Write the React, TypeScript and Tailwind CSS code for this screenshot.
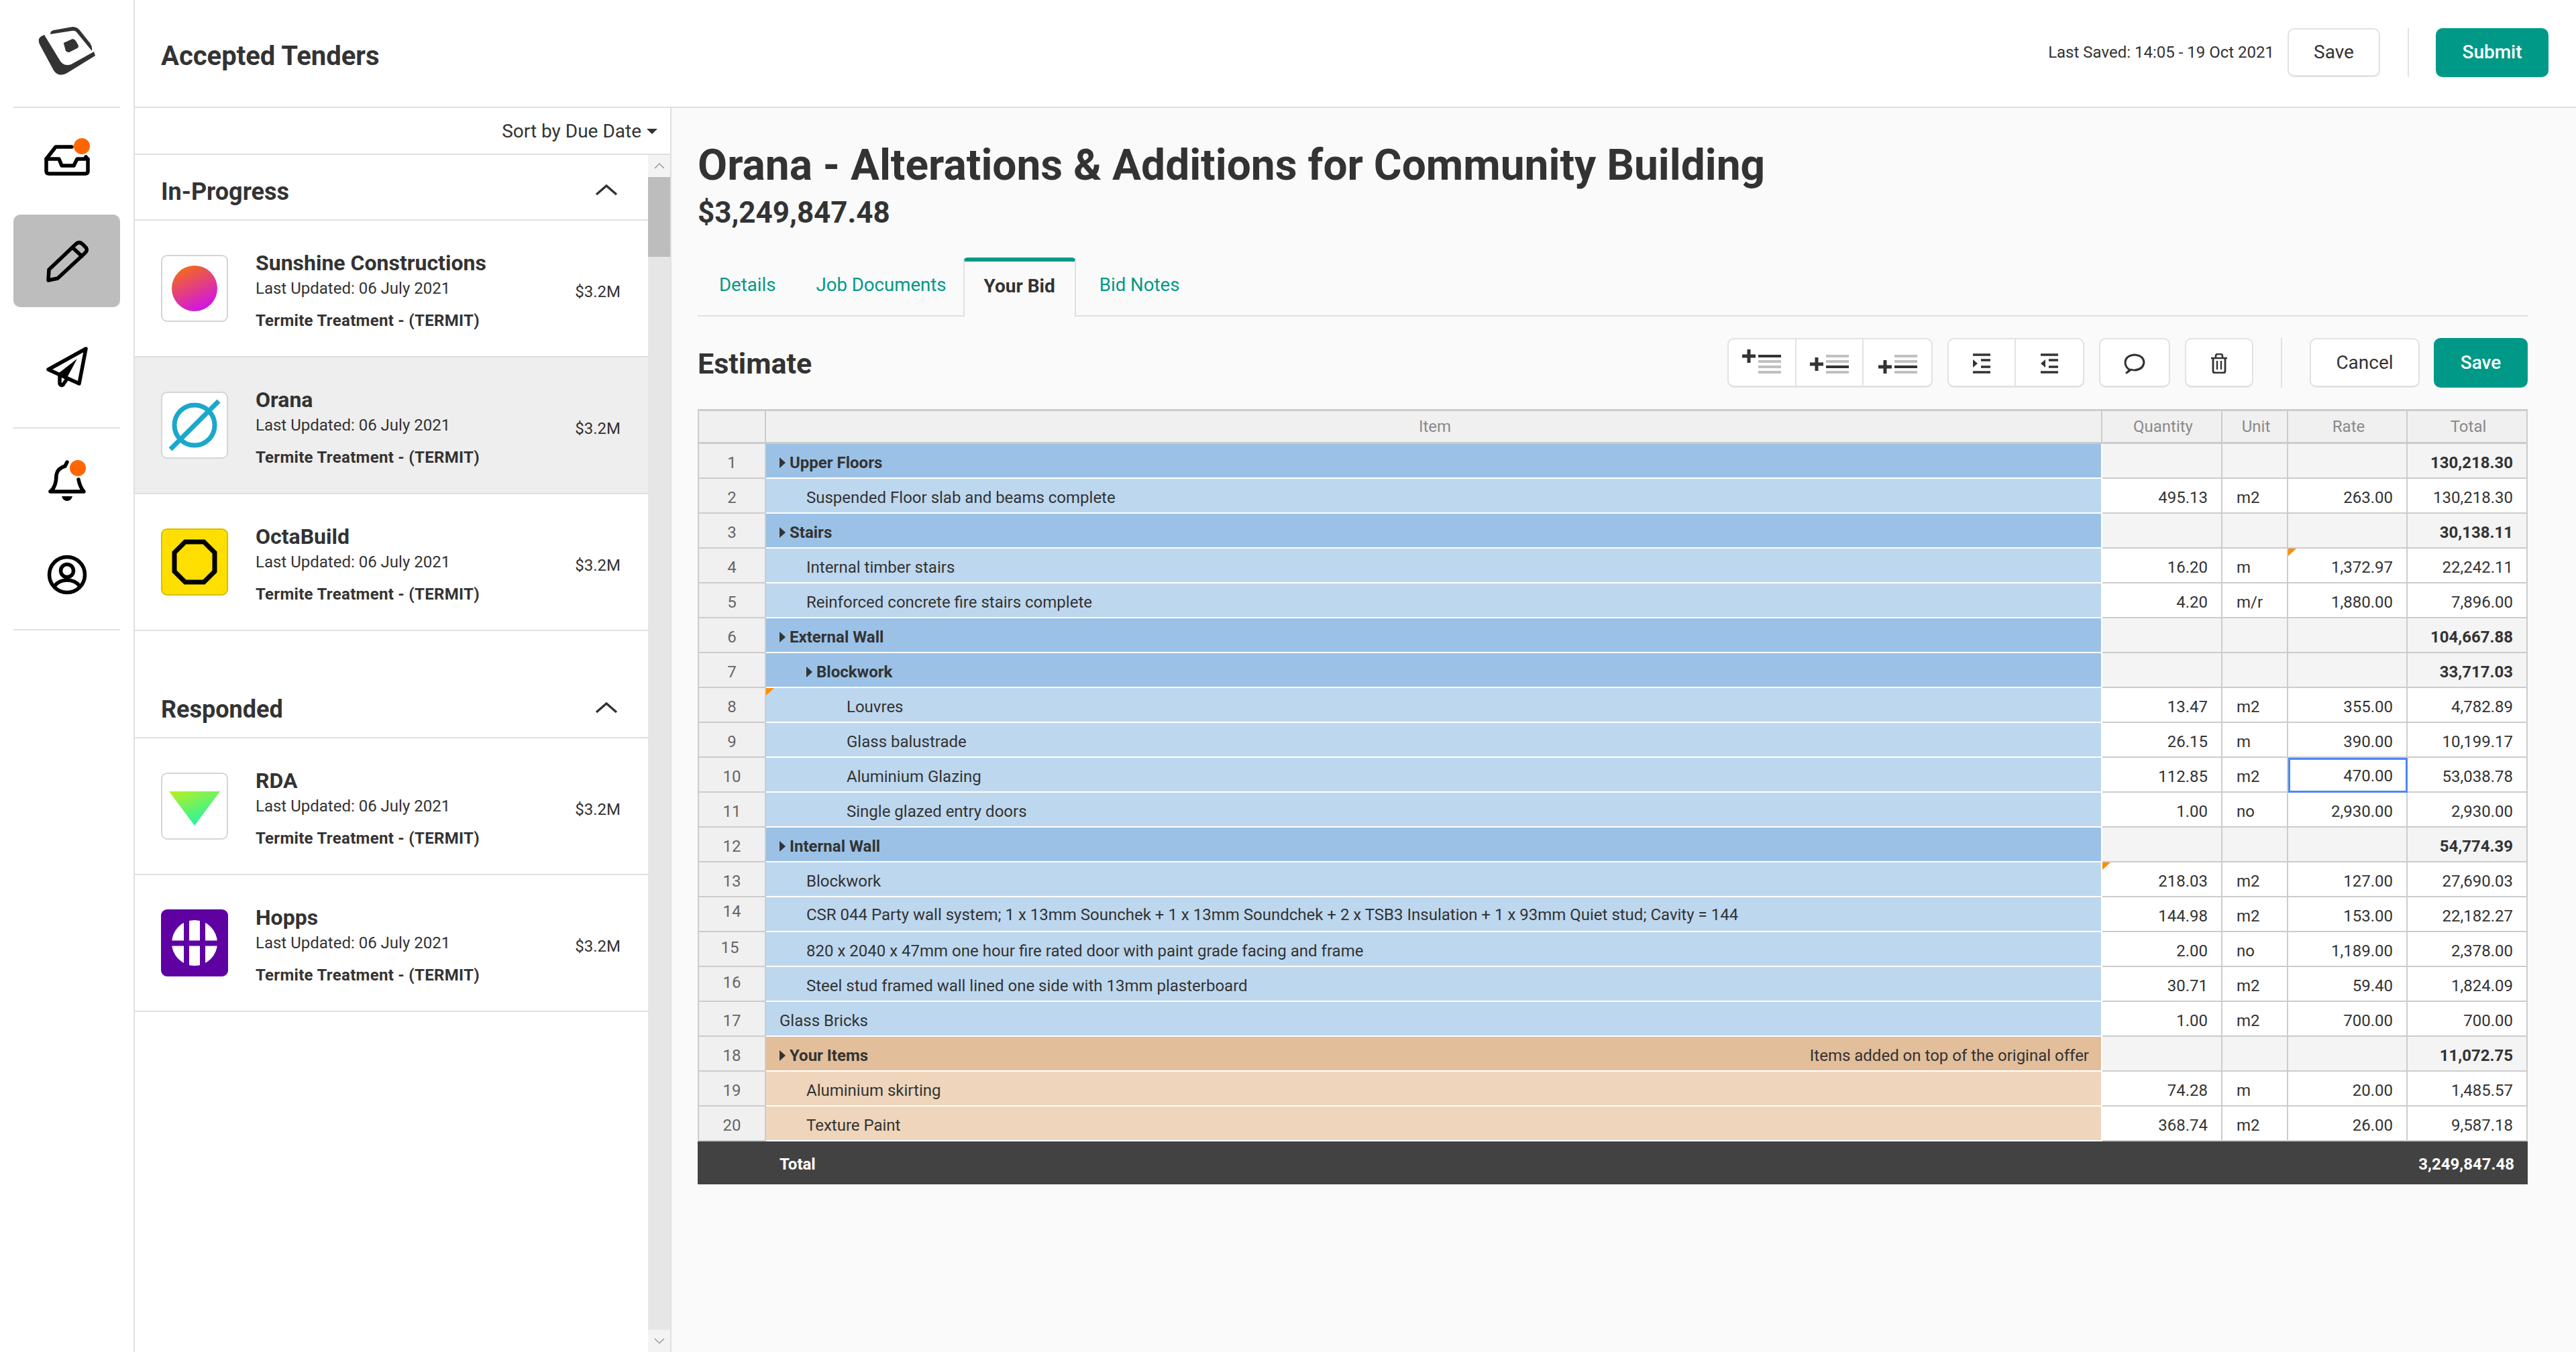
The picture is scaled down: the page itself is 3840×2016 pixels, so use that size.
import React from 'react';

type Row = {
  n: number;
  text: string;
  kind: 'group' | 'item';
  indent?: 0 | 1 | 2;
  tan?: boolean;
  qty?: string;
  unit?: string;
  rate?: string;
  total: string;
  note?: 'item' | 'qty' | 'rate';
  numCls?: string;
  textCls?: string;
};

const rows: Row[] = [
  { n: 1, text: 'Upper Floors', kind: 'group', total: '130,218.30' },
  { n: 2, text: 'Suspended Floor slab and beams complete', kind: 'item', indent: 1, qty: '495.13', unit: 'm2', rate: '263.00', total: '130,218.30' },
  { n: 3, text: 'Stairs', kind: 'group', total: '30,138.11' },
  { n: 4, text: 'Internal timber stairs', kind: 'item', indent: 1, qty: '16.20', unit: 'm', rate: '1,372.97', total: '22,242.11', note: 'rate' },
  { n: 5, text: 'Reinforced concrete fire stairs complete', kind: 'item', indent: 1, qty: '4.20', unit: 'm/r', rate: '1,880.00', total: '7,896.00' },
  { n: 6, text: 'External Wall', kind: 'group', total: '104,667.88' },
  { n: 7, text: 'Blockwork', kind: 'group', indent: 1, total: '33,717.03' },
  { n: 8, text: 'Louvres', kind: 'item', indent: 2, qty: '13.47', unit: 'm2', rate: '355.00', total: '4,782.89', note: 'item' },
  { n: 9, text: 'Glass balustrade', kind: 'item', indent: 2, qty: '26.15', unit: 'm', rate: '390.00', total: '10,199.17' },
  { n: 10, text: 'Aluminium Glazing', kind: 'item', indent: 2, qty: '112.85', unit: 'm2', rate: '470.00', total: '53,038.78' },
  { n: 11, text: 'Single glazed entry doors', kind: 'item', indent: 2, qty: '1.00', unit: 'no', rate: '2,930.00', total: '2,930.00' },
  { n: 12, text: 'Internal Wall', kind: 'group', total: '54,774.39' },
  { n: 13, text: 'Blockwork', kind: 'item', indent: 1, qty: '218.03', unit: 'm2', rate: '127.00', total: '27,690.03', note: 'qty' },
  { n: 14, text: 'CSR 044 Party wall system; 1 x 13mm Sounchek + 1 x 13mm Soundchek + 2 x TSB3 Insulation + 1 x 93mm Quiet stud; Cavity = 144', kind: 'item', indent: 1, qty: '144.98', unit: 'm2', rate: '153.00', total: '22,182.27', numCls: 'pb-[14px]', textCls: 'pt-[2px]' },
  { n: 15, text: '820 x 2040 x 47mm one hour fire rated door with paint grade facing and frame', kind: 'item', indent: 1, qty: '2.00', unit: 'no', rate: '1,189.00', total: '2,378.00', numCls: 'pb-[9px] pr-[6px]', textCls: 'pt-[6px]' },
  { n: 16, text: 'Steel stud framed wall lined one side with 13mm plasterboard', kind: 'item', indent: 1, qty: '30.71', unit: 'm2', rate: '59.40', total: '1,824.09', numCls: 'pb-[10px]', textCls: 'pt-[6px]' },
  { n: 17, text: 'Glass Bricks', kind: 'item', qty: '1.00', unit: 'm2', rate: '700.00', total: '700.00' },
  { n: 18, text: 'Your Items', kind: 'group', tan: true, total: '11,072.75' },
  { n: 19, text: 'Aluminium skirting', kind: 'item', indent: 1, tan: true, qty: '74.28', unit: 'm', rate: '20.00', total: '1,485.57' },
  { n: 20, text: 'Texture Paint', kind: 'item', indent: 1, tan: true, qty: '368.74', unit: 'm2', rate: '26.00', total: '9,587.18' },
];

const gridCols = 'grid grid-cols-[102px_1992px_179px_98px_178px_179px]';

// Small flag in the corner of a cell with a comment on it
function Note() {
  return <span className="absolute left-0 top-0 h-[11px] w-[12px] bg-[#ff8c00] [clip-path:polygon(0_0,100%_0,0_100%)]" />;
}

function Caret() {
  return (
    <svg width="9" height="16" viewBox="0 0 9 16" className="mr-[6px] shrink-0">
      <path d="M0 0 L9 8 L0 16 Z" fill="#333333" />
    </svg>
  );
}

function ChevronUp() {
  return (
    <svg width="34" height="18" viewBox="0 0 34 18">
      <path d="M2 16 L17 3 L32 16" fill="none" stroke="#333333" strokeWidth="3.5" />
    </svg>
  );
}

function TierIcon({ plusY, dark }: { plusY: number; dark: number }) {
  return (
    <svg width="68" height="44" viewBox="0 0 68 44" className="mr-[10px] mt-[4px]">
      <path d={`M10 ${plusY} H30 M20 ${plusY - 10} V${plusY + 10}`} stroke="#333333" strokeWidth="5" />
      {[10, 18, 26, 34].map((y, i) => (
        <rect key={y} x="34" y={y - 2} width="34" height="4" fill={i === dark ? '#333333' : '#c0c0c0'} />
      ))}
    </svg>
  );
}

function IndentIcon({ out }: { out?: boolean }) {
  return (
    <svg width="26" height="30" viewBox="0 0 26 30" className="mt-[3px]">
      <path d="M0 2 H26 M0 28 H26 M12 10 H26 M12 20 H26" stroke="#333333" strokeWidth="3.5" />
      <path d={out ? 'M7 9 L0 15 L7 21 Z' : 'M0 9 L7 15 L0 21 Z'} fill="#333333" />
    </svg>
  );
}

function LogoMark() {
  return (
    <svg width="120" height="120" viewBox="0 0 120 120">
      <path d="M18 38 Q20 34 26 32 L48 68 Q54 80 66 76 L100 57 L102 63 L63 87 Q48 97 40 85 L19 46 Q17 42 18 38 Z" fill="#333333" />
      <path d="M35 31 Q35 26 40 25 L68 20 Q74 20 78 24 L94 44 Q98 50 97 56 L75 29 Q72 25 67 26 Z" fill="#333333" />
      <path d="M55 45 Q54 44 57 43 L68 38 Q71 38 73 41 L77 48 Q77 51 75 52 L63 58 Q60 58 58 56 Z" fill="#333333" />
    </svg>
  );
}

function NavSlot({ children, active, cls }: { children: React.ReactNode; active?: boolean; cls: string }) {
  return (
    <div className={`mx-5 flex h-[138px] items-center justify-center rounded-[10px] ${active ? 'bg-[#bdbdbd]' : ''} ${cls}`}>
      {children}
    </div>
  );
}

function Sidebar() {
  const icon = { fill: 'none', stroke: '#000000', strokeWidth: 5.5, strokeLinejoin: 'round', strokeLinecap: 'round' } as const;
  return (
    <div className="flex w-[201px] shrink-0 flex-col border-r-2 border-[#e0e0e0]">
      <div className="flex h-[152px] items-center justify-center pt-[8px]">
        <LogoMark />
      </div>
      <div className="mx-5 border-b-2 border-[#e0e0e0] pt-[7px]" />
      <NavSlot cls="mt-[10px]">
        <svg width="110" height="110" viewBox="-5 -5 110 110">
          <path d="M57 29 H33 L19 47 V65 Q19 69 23 69 H77 Q81 69 81 65 V48 L78 44" {...icon} />
          <path d="M19 47 H38 L42 57 H60 L65 47 H81" {...icon} />
          <circle cx="72" cy="28" r="12" fill="#ff6600" />
        </svg>
      </NavSlot>
      <NavSlot active cls="mt-[11px]">
        <svg width="110" height="110" viewBox="-5 144 110 110">
          <path d="M22 228 L23 212 L63 174 Q68 169 73 174 L78 179 Q81 183 77 187 L36 225 Z" {...icon} />
          <path d="M59 180 L72 192" {...icon} />
        </svg>
      </NavSlot>
      <NavSlot cls="mt-[21px]">
        <svg width="110" height="110" viewBox="-5 303 110 110">
          <path d="M78 330 L22 361 L68 382 Z" {...icon} />
          <path d="M39 368 V382 Q42 387 45 382 L50 375" {...icon} />
          <path d="M65 345 L38 366 L50 373 Z" fill="#000000" />
        </svg>
      </NavSlot>
      <div className="mx-5 mt-[20px] border-b-2 border-[#e0e0e0]" />
      <NavSlot cls="mt-[9px]">
        <svg width="110" height="110" viewBox="-5 -8 110 110">
          <path d="M50 19 L47 25 Q36 28 34 38 Q34 56 25 63 H75 Q69 56 67 45" {...icon} />
          <path d="M42 70 H58 Q56 77 50 77 Q44 77 42 70 Z" fill="#000000" />
          <circle cx="66" cy="28" r="12" fill="#ff6600" />
        </svg>
      </NavSlot>
      <NavSlot cls="mt-[3px]">
        <svg width="110" height="110" viewBox="-5 133 110 110">
          <circle cx="50" cy="187" r="26.5" {...icon} />
          <circle cx="50" cy="181" r="9.5" {...icon} />
          <path d="M31 204 Q38 195 50 195 Q62 195 69 204" {...icon} />
        </svg>
      </NavSlot>
      <div className="mx-5 mt-[11px] border-b-2 border-[#e0e0e0]" />
    </div>
  );
}

function TenderLogo({ name }: { name: string }) {
  const base = 'flex h-[100px] w-[100px] shrink-0 items-center justify-center rounded-[9px] border-2';
  if (name === 'Sunshine Constructions') {
    return (
      <div className={`${base} border-[#d5d5d5] bg-white`}>
        <div className="h-[68px] w-[68px] rounded-full bg-[linear-gradient(155deg,#f56a1a_10%,#cf10f0_90%)]" />
      </div>
    );
  }
  if (name === 'Orana') {
    return (
      <div className={`${base} border-[#d5d5d5] bg-white`}>
        <svg width="96" height="96" viewBox="2 2 96 96">
          <circle cx="50" cy="50" r="30" fill="none" stroke="#1ba8cb" strokeWidth="7" />
          <path d="M14 86 L86 14" stroke="#1ba8cb" strokeWidth="7" />
        </svg>
      </div>
    );
  }
  if (name === 'OctaBuild') {
    return (
      <div className={`${base} border-[#d9bd00] bg-[#ffdf00]`}>
        <svg width="96" height="96" viewBox="2 2 96 96">
          <path d="M36 20 H64 L80 36 V64 L64 80 H36 L20 64 V36 Z" fill="none" stroke="#000000" strokeWidth="7" />
        </svg>
      </div>
    );
  }
  if (name === 'RDA') {
    return (
      <div className={`${base} border-[#d5d5d5] bg-white`}>
        <svg width="96" height="96" viewBox="2 2 96 96">
          <defs>
            <linearGradient id="rda" x1="0" y1="0" x2="0.6" y2="1">
              <stop offset="0" stopColor="#bdf01e" />
              <stop offset="1" stopColor="#1ff5a5" />
            </linearGradient>
          </defs>
          <path d="M12 28 H88 L50 79 Z" fill="url(#rda)" />
        </svg>
      </div>
    );
  }
  return (
    <div className={`${base} border-[#5f00a3] bg-[#5f00a3]`}>
      <svg width="96" height="96" viewBox="2 2 96 96">
        <circle cx="50" cy="50" r="34" fill="#ffffff" />
        <path d="M38 10 V90 M62 10 V90 M10 50.5 H90" stroke="#5f00a3" strokeWidth="8" />
      </svg>
    </div>
  );
}

function TenderItem({ name, selected }: { name: string; selected?: boolean }) {
  return (
    <div className={`flex h-[204px] items-center border-b-2 border-[#e0e0e0] pl-[39px] pr-[41px] ${selected ? 'bg-[#eeeeee]' : 'bg-white'}`}>
      <TenderLogo name={name} />
      <div className="ml-[41px] flex-1 pt-[9px]">
        <div className="text-[32px] font-bold leading-[38px]">{name}</div>
        <div className="text-[24px] leading-[38px]">Last Updated: 06 July 2021</div>
        <div className="mt-[10px] text-[24px] font-bold leading-[38px] tracking-[0.3px]">Termite Treatment - (TERMIT)</div>
      </div>
      <div className="pt-[10px] text-[24px]">$3.2M</div>
    </div>
  );
}

function SectionHead({ title }: { title: string }) {
  return (
    <div className="flex h-[98px] items-center justify-between border-b-2 border-[#e0e0e0] pl-[39px] pr-[45px]">
      <h2 className="pt-[13px] text-[36px] font-bold">{title}</h2>
      <div className="pt-[8px]">
        <ChevronUp />
      </div>
    </div>
  );
}

function TenderList() {
  return (
    <div className="flex w-[800px] shrink-0 flex-col border-r-2 border-[#e0e0e0] bg-white">
      <div className="flex h-[70px] shrink-0 items-center justify-end border-b-2 border-[#e0e0e0] pr-[19px] pt-[2px] text-[28px]">
        Sort by Due Date
        <svg width="16" height="8" viewBox="0 0 16 8" className="ml-[8px]">
          <path d="M0 0 H16 L8 8 Z" fill="#333333" />
        </svg>
      </div>
      <div className="flex flex-1">
        <div className="flex-1">
          <SectionHead title="In-Progress" />
          <TenderItem name="Sunshine Constructions" />
          <TenderItem name="Orana" selected />
          <TenderItem name="OctaBuild" />
          <div className="h-[62px]" />
          <SectionHead title="Responded" />
          <TenderItem name="RDA" />
          <TenderItem name="Hopps" />
        </div>
        {/* Scrollbar */}
        <div className="flex w-[33px] flex-col bg-[#e6e6e6]">
          <div className="flex h-[33px] items-center justify-center bg-[#f3f3f3]">
            <svg width="16" height="9" viewBox="0 0 16 9"><path d="M1 8 L8 1 L15 8" fill="none" stroke="#8a8a8a" strokeWidth="1.2" /></svg>
          </div>
          <div className="h-[119px] bg-[#bdbdbd]" />
          <div className="flex-1" />
          <div className="flex h-[33px] items-center justify-center bg-[#f3f3f3]">
            <svg width="16" height="9" viewBox="0 0 16 9"><path d="M1 1 L8 8 L15 1" fill="none" stroke="#8a8a8a" strokeWidth="1.2" /></svg>
          </div>
        </div>
      </div>
    </div>
  );
}

function Toolbar() {
  const box = 'flex h-[74px] items-center justify-center border-2 border-b-[3px] border-[#e2e2e2] bg-white';
  const seg = 'flex h-full items-center justify-center border-r-2 border-[#e2e2e2] last:border-r-0';
  return (
    <div className="mt-[32px] flex h-[74px] items-center">
      <h2 className="flex-1 pt-[3px] text-[43px] font-bold">Estimate</h2>
      <div className={`${box} w-[306px] rounded-[10px]`}>
        <div className={`${seg} w-1/3`}><TierIcon plusY={10} dark={0} /></div>
        <div className={`${seg} w-1/3`}><TierIcon plusY={22} dark={2} /></div>
        <div className={`${seg} w-1/3`}><TierIcon plusY={26} dark={2} /></div>
      </div>
      <div className={`${box} ml-[22px] w-[204px] rounded-[10px]`}>
        <div className={`${seg} w-1/2`}><IndentIcon /></div>
        <div className={`${seg} w-1/2`}><IndentIcon out /></div>
      </div>
      <div className={`${box} ml-[22px] w-[106px] rounded-[10px]`}>
        <svg width="32" height="32" viewBox="0 0 32 32" className="mt-[3px]">
          <path d="M8 25 Q2 21 2 14 Q3 4 16 3 Q29 4 30 14 Q29 25 16 26 Q13 26 11 25 L4 30 Q8 27 8 25 Z" fill="none" stroke="#333333" strokeWidth="3" strokeLinejoin="round" />
        </svg>
      </div>
      <div className={`${box} ml-[22px] w-[102px] rounded-[10px]`}>
        <svg width="26" height="30" viewBox="0 0 26 30" className="mt-[3px]">
          <path d="M1 7 H25 M8 7 V4 Q8 1 11 1 H15 Q18 1 18 4 V7" fill="none" stroke="#333333" strokeWidth="2.6" />
          <path d="M4 7 V26 Q4 29 7 29 H19 Q22 29 22 26 V7" fill="none" stroke="#333333" strokeWidth="2.8" />
          <path d="M10 11 V24 M16 11 V24" stroke="#333333" strokeWidth="2.4" />
        </svg>
      </div>
      <div className="ml-[41px] h-[74px] w-[2px] bg-[#e2e2e2]" />
      <button className={`${box} ml-[41px] w-[164px] rounded-[10px] text-[28px]`}>Cancel</button>
      <button className="ml-[21px] flex h-[74px] w-[140px] items-center justify-center rounded-[10px] bg-[#009987] text-[28px] font-medium text-white">Save</button>
    </div>
  );
}

function EstimateTable() {
  const head = 'flex items-center justify-center border-r-2 border-b-[3px] border-[#cccccc] bg-[#f0f0f0] pl-[4px] text-[#8a8a8a]';
  return (
    <div className="mt-[32px] text-[24px] leading-[30px]">
      <div className={`${gridCols} h-[52px] border-t-[3px] border-[#cccccc]`}>
        <div className={`${head} border-l-2`} />
        <div className={head}>Item</div>
        <div className={head}>Quantity</div>
        <div className={head}>Unit</div>
        <div className={head}>Rate</div>
        <div className={head}>Total</div>
      </div>
      {rows.map((r) => {
        const group = r.kind === 'group';
        const bg = r.tan ? (group ? 'bg-[#e2be9a]' : 'bg-[#eed5bb]') : group ? 'bg-[#9bc2e6]' : 'bg-[#bdd7ee]';
        const cellBg = group ? 'bg-[#f4f4f4]' : 'bg-white';
        const cell = `relative flex items-center border-r-2 border-b-2 border-[#cccccc] pt-[5px] ${cellBg}`;
        const pad = r.indent === 2 ? 'pl-[120px]' : r.indent === 1 ? 'pl-[60px]' : 'pl-[20px]';
        return (
          <div key={r.n} className={`${gridCols} h-[52px]`}>
            <div className={`flex items-center justify-center border-x-2 border-b-2 border-l-[#cccccc] border-r-[#cccccc] border-b-[#cccccc] bg-[#f0f0f0] pt-[5px] text-[#666666] ${r.numCls ?? ''}`}>{r.n}</div>
            <div className={`relative flex items-center justify-between border-r-2 border-b-2 border-white pr-[18px] ${bg} ${pad} ${r.textCls ?? 'pt-[5px]'}`}>
              {r.note === 'item' && <Note />}
              <span className={group ? 'flex items-center font-bold' : ''}>
                {group && <Caret />}
                {r.text}
              </span>
              {r.tan && group && <span>Items added on top of the original offer</span>}
            </div>
            <div className={`${cell} justify-end pr-[20px]`}>
              {r.note === 'qty' && <Note />}
              {r.qty}
            </div>
            <div className={`${cell} pl-[21px]`}>{r.unit}</div>
            {r.n === 10 ? (
              <div className="flex items-center justify-end border-[3px] border-[#4d86f7] bg-white pr-[19px] pt-[2px]">{r.rate}</div>
            ) : (
              <div className={`${cell} justify-end pr-[20px]`}>
                {r.note === 'rate' && <Note />}
                {r.rate}
              </div>
            )}
            <div className={`${cell} justify-end pr-[20px] ${group ? 'font-bold' : ''}`}>{r.total}</div>
          </div>
        );
      })}
      <div className="flex h-[64px] items-center justify-between bg-[#424242] pl-[122px] pr-[20px] pt-[3px] font-bold text-white">
        <span>Total</span>
        <span>3,249,847.48</span>
      </div>
    </div>
  );
}

function Tabs() {
  const tab = 'flex items-center pb-[4px] px-[30px] text-[27.6px] text-[#009987]';
  return (
    <div className="mt-[42px] flex h-[88px] border-b-2 border-[#e0e0e0]">
      <div className={`${tab} ml-[2px]`}>Details</div>
      <div className={tab}>Job Documents</div>
      <div className="-mb-[2px] -ml-[5px] flex items-center rounded-t-[6px] border-x-2 border-t-[6px] border-x-[#e0e0e0] border-t-[#009987] bg-[#fafafa] px-[29px] pb-[8px] text-[28px] font-bold">
        Your Bid
      </div>
      <div className={`${tab} ml-[5px]`}>Bid Notes</div>
    </div>
  );
}

export default function App() {
  return (
    <div className="flex h-[2016px] w-[3840px] overflow-hidden bg-white font-[Roboto,sans-serif] text-[#333333]">
      <Sidebar />
      <div className="flex flex-1 flex-col">
        {/* Top bar */}
        <div className="flex h-[161px] shrink-0 items-center border-b-2 border-[#e0e0e0] pb-[3px] pl-[39px] pr-[41px]">
          <h1 className="flex-1 pt-[12px] text-[40px] font-bold">Accepted Tenders</h1>
          <span className="text-[24px]">Last Saved: 14:05 - 19 Oct 2021</span>
          <button className="ml-[20px] h-[73px] w-[138px] rounded-[10px] border-2 border-b-[3px] border-[#e2e2e2] bg-white text-[28px]">Save</button>
          <div className="ml-[41px] h-[73px] w-[2px] bg-[#e2e2e2]" />
          <button className="ml-[40px] h-[73px] w-[168px] rounded-[10px] bg-[#009987] text-[28px] font-medium text-white">Submit</button>
        </div>
        <div className="flex flex-1">
          <TenderList />
          <div className="flex-1 bg-[#fafafa] pl-[39px] pr-[72px] pt-[46px]">
            <h1 className="text-[64px] font-bold leading-[80px]">Orana - Alterations &amp; Additions for Community Building</h1>
            <div className="mt-[5px] text-[44px] font-bold leading-[50px]">$3,249,847.48</div>
            <Tabs />
            <Toolbar />
            <EstimateTable />
          </div>
        </div>
      </div>
    </div>
  );
}
